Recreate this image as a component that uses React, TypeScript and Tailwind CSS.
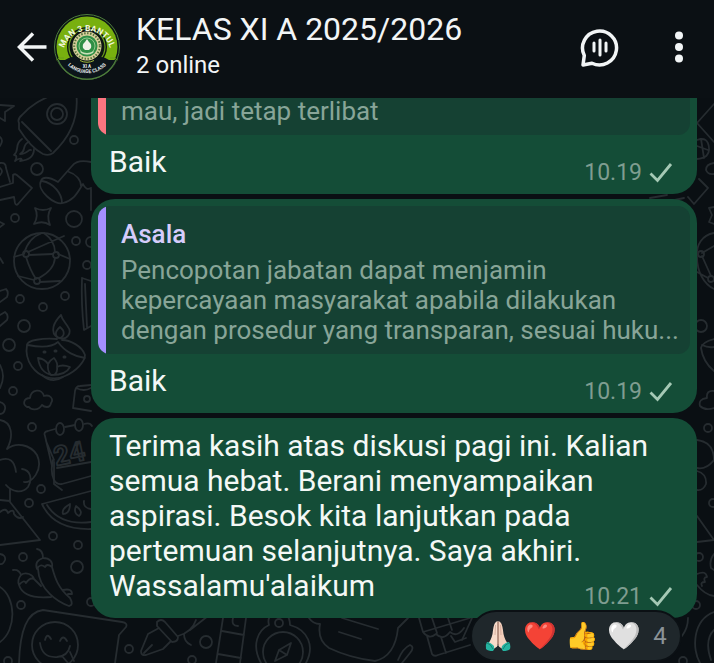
import React from 'react'

type Quote = {
  name?: string
  text: string
  accent: 'red' | 'violet'
}

type Message = {
  id: number
  body: string
  time: string
  quote?: Quote
}

const messages: Message[] = [
  {
    id: 1,
    quote: { text: 'mau, jadi tetap terlibat', accent: 'red' },
    body: 'Baik',
    time: '10.19',
  },
  {
    id: 2,
    quote: {
      name: 'Asala',
      text: 'Pencopotan jabatan dapat menjamin kepercayaan masyarakat apabila dilakukan dengan prosedur yang transparan, sesuai huku...',
      accent: 'violet',
    },
    body: 'Baik',
    time: '10.19',
  },
  {
    id: 3,
    body: "Terima kasih atas diskusi pagi ini. Kalian semua hebat. Berani menyampaikan aspirasi. Besok kita lanjutkan pada pertemuan selanjutnya. Saya akhiri. Wassalamu'alaikum",
    time: '10.21',
  },
]

function GroupAvatar() {
  return (
    <svg viewBox="0 0 66 66" className="size-[66px] shrink-0" role="img" aria-label="MAN 3 Bantul">
      <defs>
        <path id="arc-top" d="M9 41 A24 24 0 1 1 57 41" />
        <path id="arc-bottom" d="M9 44 A26.500 26.500 0 0 0 57 44" />
      </defs>
      <circle cx="33" cy="33" r="32.500" fill="#0c1416" stroke="#4f7f3c" strokeWidth="1" />
      <circle cx="33" cy="33" r="30.500" fill="#78b00f" />
      <circle cx="33" cy="33" r="20" fill="#0b1512" />
      <circle cx="33" cy="33" r="18" fill="none" stroke="#6a9d1c" strokeWidth="1.200" />
      <path d="M3 46 L11 46 Q18 41 23 44 Q33 51 43 44 Q48 41 55 46 L63 46 A33 33 0 0 1 3 46 Z" fill="#0c151a" />
      <path d="M2.500 46 Q5 43 10 44 M56 44 Q61 43 63.500 46" fill="none" stroke="#6a9d1c" strokeWidth="1" />
      <path d="M4 46 A31.500 31.500 0 0 0 62 46" fill="none" stroke="#4f7f3c" strokeWidth="1.200" />
      <circle cx="33" cy="32" r="14.500" fill="#d8cf9c" />
      <circle cx="33" cy="32" r="12.800" fill="none" stroke="#54733a" strokeWidth="2" strokeDasharray="1.500 1.500" />
      <circle cx="33" cy="32" r="10.500" fill="#2f8f45" />
      <circle cx="33" cy="32" r="8" fill="none" stroke="#a9d59b" strokeWidth="0.800" />
      <path d="M33 25 L35 28 Q38 30 37 34 L35 36 H31 L29 34 Q28 30 31 28 Z" fill="#eef3e6" />
      <path d="M26 37 Q33 41 40 37 L39 39 Q33 42 27 39 Z" fill="#c8dfb8" />
      <path d="M26 46.500 Q33 50 40 46.500" fill="none" stroke="#a2b93b" strokeWidth="1" />
      <text fill="#f2f7dc" fontSize="8.500" fontWeight="700" textAnchor="middle">
        <textPath href="#arc-top" startOffset="50%">MAN 3 BANTUL</textPath>
      </text>
      <text x="33" y="53.500" fill="#e8ecec" fontSize="4.500" fontWeight="700" textAnchor="middle">XI A</text>
      <text fill="#e8ecec" fontSize="5" fontWeight="700" textAnchor="middle">
        <textPath href="#arc-bottom" startOffset="50%">LANGUAGE CLASS</textPath>
      </text>
    </svg>
  )
}

function Header() {
  return (
    <header className="relative z-10 flex h-[98px] items-center bg-[#0b1014] pb-1 pl-4 pr-[27px] text-[#f2f5f6]">
      <button type="button" aria-label="Kembali" className="shrink-0">
        <svg viewBox="0 0 32 32" className="size-8" fill="none" stroke="currentColor" strokeWidth="3.500">
          <path d="M30.500 16 H4 M17 2.500 L3.500 16 L17 29.500" />
        </svg>
      </button>
      <div className="ml-1.5 shrink-0">
        <GroupAvatar />
      </div>
      <div className="ml-4 min-w-0 flex-1 pb-1">
        <h1 className="truncate text-[32px] leading-10">KELAS XI A 2025/2026</h1>
        <p className="text-[24px] leading-8">2 online</p>
      </div>
      <button type="button" aria-label="Obrolan suara" className="shrink-0">
        <svg viewBox="0 0 40 40" className="size-10" fill="none" stroke="currentColor" strokeWidth="3.500" strokeLinejoin="round">
          <path d="M4.300 28.500 A17 17 0 1 1 12 36.200 L3 38 Z" />
          <path d="M14 16 V24 M20 13 V28 M26 16 V24" strokeWidth="3" strokeLinecap="round" />
        </svg>
      </button>
      <button type="button" aria-label="Menu lainnya" className="ml-[51px] shrink-0">
        <svg viewBox="0 0 16 40" className="h-10 w-4" fill="currentColor">
          <circle cx="8" cy="8.500" r="4" />
          <circle cx="8" cy="20" r="4" />
          <circle cx="8" cy="31.500" r="4" />
        </svg>
      </button>
    </header>
  )
}

function Wallpaper() {
  return (
    <svg
      viewBox="0 96 714 567"
      preserveAspectRatio="xMinYMin slice"
      className="absolute inset-0 size-full"
      fill="none"
      stroke="#262c30"
      strokeWidth="1.800"
      strokeLinecap="round"
      strokeLinejoin="round"
      aria-hidden="true"
    >
      {/* rocket */}
      <path d="M19 123 Q17 119 22 115 C32 103 46 98 58 92 L76 92 C80 120 68 139 53 153 Q49 156 43 154 Q31 148 19 129 Z M22 122 L51 151" />
      <circle cx="57" cy="114" r="10" />
      <circle cx="57" cy="114" r="6" />
      <path d="M22 139 C14 144 20 150 14 155 C17 155 17 158 15 161 C20 157 24 159 20 161 C30 160 34 155 34 149 M29 142 C21 145 27 151 20 154 C28 154 28 149 31 150" />
      <path d="M0 105 L14 106 L5 112 L5 121 L0 118 M0 137 Q4 140 0 146" />
      {/* sign and arrow */}
      <path d="M0 163 Q6 162 6 168 L10 182 M0 168 Q4 171 0 175 M0 187 L13 183 V175 Q15 173 18 176 L32 188 L18 204 Q16 206 15 203 L14 197 L0 200" />
      {/* sock */}
      <path d="M41 181 C42 177 48 176 58 182 L72 166 Q77 159 91 162 M41 181 C36 190 55 206 63 203 C75 200 78 191 83 184 Q86 191 91 188 M42 181 C54 183 62 194 62 203 M69 172 C76 174 81 180 81 186 M91 188 Q91 205 91 210" />
      <path d="M35 208 Q43 212 51 208 Q46 216 50 225 Q43 220 34 224 Q39 216 35 208 Z" />
      {/* globe */}
      <circle cx="42" cy="261" r="28" />
      <path d="M14 257 L24 254 Q28 238 42 233 M28 252 L64 236 M26 257 Q30 270 36 279 M39 278 Q54 270 55 258 M58 254 L70 259 M29 255 L53 254 M55 252 Q55 241 44 233 M18 276 L34 280 M40 282 L60 281" />
      <circle cx="26" cy="254" r="3" />
      <circle cx="56" cy="255" r="3" />
      <circle cx="37" cy="281" r="3" />
      <path d="M0 222 L4 224 L0 227 M0 258 L3 263 M0 291 L6 289 Q9 292 7 297 L0 302 M0 315 L5 312 Q9 315 7 320 L0 326" />
      {/* oil lamp */}
      <path d="M61 315 C54 322 49 332 58 338 C68 341 72 332 68 327 C66 323 62 320 61 315 Z M60 327 C54 332 55 337 60 338 C65 336 65 331 60 327 Z" />
      <path d="M57 339 C43 338 27 340 27 345 C24 362 36 374 46 377 Q56 380 65 376 C77 371 85 361 85 355 C82 346 70 340 62 340 M28 345 C42 348 52 347 58 342 C65 352 76 357 85 358" />
      <path d="M38 358 Q45 359 48 364 Q50 360 54 358 Q58 363 57 367 Q62 364 70 367 Q66 375 52 375 Q40 373 38 358 Z M48 364 Q47 371 51 375 M57 367 Q58 372 54 375 M42 375 Q52 384 63 377" />
      <path d="M44 352 h1 M55 351 h1 M64 357 h1" strokeWidth="3" />
      <path d="M82 278 L91 281 M82 278 Q81 304 84 330 L91 326 M85 284 L87 327" />
      <path d="M27 407 C22 404 24 398 30 398 C31 389 42 388 44 396 C50 394 54 399 51 403 C50 409 44 407 42 405 C38 411 31 410 29 407 Z" />
      <path d="M91 385 L80 386 Q76 386 75 391 L73 408 L91 411 M76 388 Q84 392 91 388" />
      <circle cx="87" cy="399" r="3" />
      {/* calendar */}
      <path d="M45 436 Q43 432 48 431 L55 429 M65 427 L75 425 M84 424 Q90 422 92 426 M45 436 L52 466 M62 490 L54 484 V462 M46 441 L54 460" />
      <ellipse cx="60" cy="429" rx="4" ry="6" />
      <ellipse cx="79" cy="425" rx="4" ry="6" />
      <text x="56" y="466" fontSize="27" fontWeight="700" transform="rotate(-12 56 466)">24</text>
      {/* tree and hill */}
      <path d="M0 365 Q6 376 0 388 M0 402 Q6 404 5 409 Q4 414 0 414 M0 420 C12 422 14 436 7 449 C16 442 30 444 37 455 C44 470 31 484 24 482 M0 460 Q14 455 16 472 M22 469 C30 470 33 478 28 487 C22 494 12 492 6 485 M10 489 V502 L40 540 L0 545 M0 500 L10 501 M0 512 Q6 507 8 513 Q14 508 14 514 Q18 520 23 517" />
      {/* toast and watermelon */}
      <path d="M53 460 Q50 472 54 480 Q57 485 62 484 L91 476 M57 468 L91 462 M42 504 L91 491 M42 504 Q54 530 91 529 M47 505 Q60 526 91 522" />
      <path d="M70 504 Q61 509 63 514 Q70 514 70 504 Z M76 506 Q73 513 79 516 Q84 512 76 506 Z M84 501 Q83 508 91 509" />
      {/* chillies */}
      <path d="M13 570 Q19 569 21 575 C26 571 33 575 34 579 M21 575 Q17 580 19 585 Q24 579 26 583 Q30 577 34 579 M19 585 C23 598 40 598 51 597 M34 579 L41 586 M37 549 Q43 550 43 558 C50 558 53 562 52 567 Q47 563 45 567 Q40 563 37 569 Q34 561 43 558 M38 569 C39 590 58 602 69 606 Q74 605 70 598 C58 588 55 578 52 567 M63 590 Q72 588 72 594 L68 594" />
      {/* smiley card */}
      <path d="M19 663 C20 630 27 612 43 610 L122 622 Q128 623 126 627 L119 635 L115 663" />
      <circle cx="55" cy="645" r="23" />
      <path d="M45 640 Q47 632 51 639 M60 641 Q63 634 67 641 M40 643 Q42 658 57 657 Q68 656 70 646 M62 656 L68 663 M70 652 L74 661" />
      <path d="M0 587 C16 597 17 630 0 642 M0 554 Q6 555 5 560 Q3 565 0 564" />
      {/* pen */}
      <path d="M157 622 Q161 618 165 622 L178 637 Q178 642 172 642 L157 626 Z M159 628 L148 634 L141 651 Q141 656 146 655 L163 649 L171 641 M144 653 L152 645 M178 636 Q192 632 196 620 M184 634 Q184 642 191 645 M190 630 L208 616" />
      <circle cx="206" cy="642" r="6" />
      <circle cx="129" cy="649" r="4" />
      <circle cx="192" cy="660" r="4" />
      {/* ruler */}
      <path d="M223 618 L216 663 M246 618 L240 663 M222 631 L244 635 M218 654 L241 658 M233 618 Q231 626 238 626" />
      {/* compass */}
      <path d="M261 663 C251 645 258 630 269 625 Q267 618 272 614 M306 663 C315 646 308 630 290 625 Q290 618 286 614" />
      <circle cx="283" cy="652" r="20" />
      <circle cx="279" cy="623" r="4" />
      <path d="M291 643 L287 655 L275 661 L279 650 Z M279 650 L287 655" />
      {/* flag, hand, basket */}
      <path d="M309 618 Q313 624 320 624 Q317 640 329 648 Q350 658 375 661 C388 658 396 648 398 628 L408 618 M342 618 L378 629 M339 632 L361 639 M398 660 Q403 648 410 645 Q415 647 410 653 L402 663 M419 618 L423 632 L470 618 M423 632 Q429 640 436 634 Q443 641 450 632 Q457 638 464 628 M427 636 L432 654 Q434 657 438 655 L470 645 M441 637 L446 653 M451 636 L455 642 L466 638 M432 618 L437 633 M448 618 L452 630" />
      {/* right edge */}
      <path d="M714 104 L697 123 L714 142 M697 140 Q708 136 709 148 Q710 158 697 159 M697 146 L708 150 M701 139 L704 158 M714 163 Q706 164 706 170 Q708 175 714 174 M699 179 L708 188 L694 204 L688 197 M650 198 L667 195 M670 201 L684 198 M714 207 L709 208 L712 215 L709 222 L714 224" />
      <path d="M714 233 C702 235 696 245 697 257 C697 272 704 284 714 289 M702 253 L714 246 M702 256 L711 276 M697 272 L708 278" />
      <circle cx="701" cy="254" r="3" />
      <circle cx="711" cy="279" r="3" />
      <circle cx="701" cy="326" r="6" />
      <path d="M714 339 Q702 342 701 348 Q703 362 714 371 M702 345 Q708 348 714 347 M714 391 Q706 390 707 398 Q698 399 700 406 Q705 411 714 408" />
      <circle cx="708" cy="428" r="4" />
      <path d="M697 440 Q714 442 714 460 Q706 470 697 468 M697 471 Q707 474 706 484 Q703 491 697 490 M697 516 L714 540 M697 542 L714 540 M714 554 Q709 560 711 568 L714 570 M697 574 Q706 570 707 577 Q703 577 705 582 Q700 582 702 586 M697 585 Q705 595 714 596" />
      <circle cx="713" cy="503" r="4" />
      <circle cx="699" cy="557" r="4" />
      <circle cx="696" cy="605" r="4" />
      <path d="M688 618 Q688 628 682 636 M714 612 C692 620 692 650 700 663 M714 630 Q704 640 711 660 M472 618 L462 640" />
      <circle cx="683" cy="661" r="4" />
      {/* loose bubbles */}
      <circle cx="74" cy="140" r="4" />
      <circle cx="37" cy="169" r="6" />
      <circle cx="15" cy="218" r="4" />
      <circle cx="74" cy="219" r="8" />
      <circle cx="76" cy="241" r="4" />
      <circle cx="91" cy="242" r="5" />
      <circle cx="87" cy="265" r="4" />
      <circle cx="20" cy="299" r="4" />
      <circle cx="43" cy="307" r="4" />
      <circle cx="65" cy="296" r="4" />
      <circle cx="24" cy="326" r="6" />
      <circle cx="9" cy="345" r="6" />
      <circle cx="18" cy="366" r="4" />
      <circle cx="13" cy="391" r="4" />
      <circle cx="32" cy="427" r="4" />
      <circle cx="41" cy="489" r="4" />
      <circle cx="29" cy="503" r="4" />
      <circle cx="53" cy="536" r="4" />
      <circle cx="78" cy="545" r="4" />
      <circle cx="23" cy="557" r="4" />
      <circle cx="77" cy="567" r="6" />
      <circle cx="21" cy="605" r="4" />
      <circle cx="91" cy="602" r="4" />
      <circle cx="8" cy="661" r="4" />
    </svg>
  )
}

function QuoteBox({ quote }: { quote: Quote }) {
  return (
    <div className={`mx-[7px] flex overflow-hidden bg-[#154133] ${quote.name ? 'mt-[7px] rounded-xl' : 'rounded-b-xl'}`}>
      <div className={`w-2 shrink-0 ${quote.accent === 'red' ? 'bg-[#fc7580]' : 'bg-[#a58fff]'}`} />
      <div className={`min-w-0 flex-1 pb-[9px] pl-[15px] pr-2 text-[26px] ${quote.name ? 'pt-3' : ''}`}>
        {quote.name && <p className="mb-[5px] font-medium leading-8 text-[#d6ccfb]">{quote.name}</p>}
        <p className="leading-[30px] text-[#88a598]">{quote.text}</p>
      </div>
    </div>
  )
}

function Bubble({ message }: { message: Message }) {
  const { quote } = message
  const corners = quote && !quote.name ? 'rounded-b-3xl' : 'rounded-3xl'
  return (
    <article className={`bg-[#144d37] ${corners}`}>
      {quote && <QuoteBox quote={quote} />}
      <div className={`grid px-[18px] ${quote ? 'pt-[9px]' : 'pt-2.5'}`}>
        <p className="col-start-1 row-start-1 pb-[15px] text-[30px] leading-[35px] text-[#f4f8f6]">
          {message.body}
        </p>
        {/* time sits on the last line of the text */}
        <div className="col-start-1 row-start-1 flex items-center gap-[7px] self-end justify-self-end pb-[7px] pr-[6px]">
          <time className="text-[23px] leading-7 text-[#7f9d90]">{message.time}</time>
          <svg viewBox="0 0 24 24" className="size-6" fill="none" stroke="#a5c9b5" strokeWidth="2.800" role="img" aria-label="Terkirim">
            <path d="M1.500 12.500 L8.500 19.500 L22 3" />
          </svg>
        </div>
      </div>
    </article>
  )
}

function PrayingHands() {
  return (
    <svg viewBox="0 0 28 32" className="h-8 w-7" role="img" aria-label="Terima kasih">
      <path d="M12.500 1.500 Q14 0.500 14 2.500 V26 L8 30 L3 25 Q7 21 8.500 14 Q9.500 5 11 3 Z" fill="#f8dccb" />
      <path d="M15.500 1.500 Q14 0.500 14 2.500 V26 L20 30 L25 25 Q21 21 19.500 14 Q18.500 5 17 3 Z" fill="#f3cfbc" />
      <path d="M14 2 V25" fill="none" stroke="#8f6657" strokeWidth="1.200" />
      <path d="M11.500 5 L11 15 M16.500 5 L17 15" fill="none" stroke="#cfa594" strokeWidth="0.800" />
      <path d="M12 30 L14 24 L16 30 Z" fill="#1f272b" />
      <path d="M3 22 Q6 22 10 26 Q11 29 9 31 Q4 31 2 29 Q1 25 3 22 Z" fill="#25b3a0" />
      <path d="M25 22 Q22 22 18 26 Q17 29 19 31 Q24 31 26 29 Q27 25 25 22 Z" fill="#25b3a0" />
      <path d="M3 23 Q7 24 9 29 M25 23 Q21 24 19 29" fill="none" stroke="#138273" strokeWidth="1" />
    </svg>
  )
}

function Reactions() {
  return (
    <button
      type="button"
      aria-label="4 reaksi"
      className="relative -mt-2 mr-[15px] flex items-center self-end rounded-full border-2 border-[#0b1014] bg-[#1f272b] px-[5px] py-1.5 text-[27px] leading-9"
    >
      <span className="flex w-[42px] justify-center">
        <PrayingHands />
      </span>
      <span className="flex w-[42px] justify-center">❤️</span>
      <span className="flex w-[42px] justify-center">👍</span>
      <span className="flex w-[42px] justify-center">🤍</span>
      <span className="w-[30px] text-center text-[24px] text-[#8b9397]">4</span>
    </button>
  )
}

export default function App() {
  return (
    <div className="flex min-h-screen flex-col bg-[#0a0f13] font-[Roboto,'Noto_Color_Emoji',sans-serif]">
      <Header />
      <main className="relative -mt-0.5 flex-1 overflow-hidden">
        <Wallpaper />
        <div className="relative flex flex-col pl-[91px] pr-[17px]">
          <div className="flex flex-col gap-[5px]">
            {messages.map((m) => (
              <Bubble key={m.id} message={m} />
            ))}
          </div>
          <Reactions />
        </div>
      </main>
    </div>
  )
}
